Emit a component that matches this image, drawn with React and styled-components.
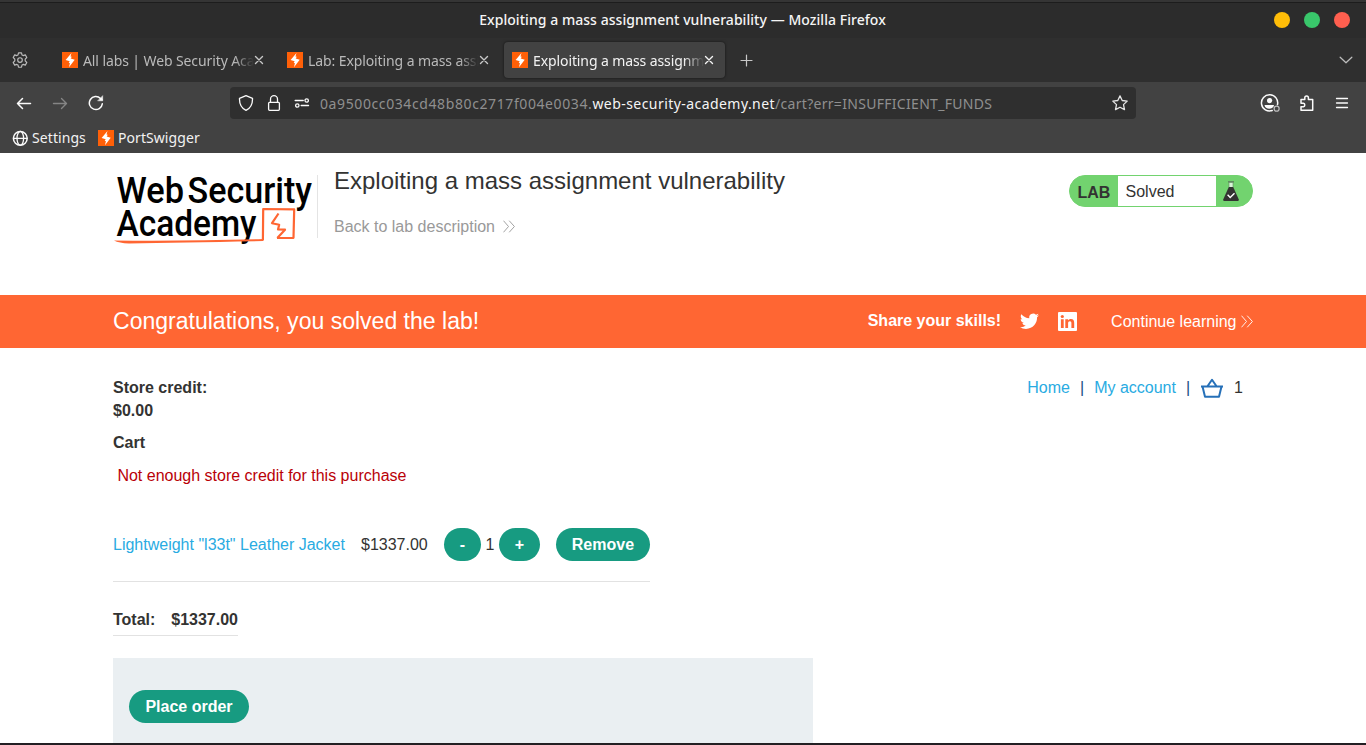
import React from "react";
import styled, { createGlobalStyle, css } from "styled-components";

const GlobalStyle = createGlobalStyle`
  *, *::before, *::after { box-sizing: border-box; }
  html, body { margin: 0; padding: 0; background: #fff; overflow: hidden; }
  svg { display: block; flex: none; }
`;

const uiFont = css`
  font-family: "Noto Sans", "Open Sans", sans-serif;
  font-size: 14px;
  white-space: nowrap;
`;

const Window = styled.div`
  display: flex;
  flex-direction: column;
  width: 1366px;
  height: 745px;
  overflow: hidden;
  background: #fff;
  border-bottom: 2px solid #231f23;
`;

/* ---------- Browser chrome ---------- */

const TitleBar = styled.header`
  flex: none;
  height: 38px;
  border-top: 2px solid #353535;
  background: #2c2c2c;
  box-shadow: inset 0 1px 0 #1d1d1d;
  display: grid;
  grid-template-columns: 1fr auto 1fr;
  align-items: center;
`;

const WindowTitle = styled.div`
  ${uiFont}
  grid-column: 2;
  font-weight: 500;
  color: #f5f5f5;
  letter-spacing: 0.05px;
  padding: 0 1px 2px 0;
`;

const WindowButtons = styled.div`
  display: flex;
  justify-content: flex-end;
  gap: 14px;
  padding-right: 16px;
`;

const WindowButton = styled.span`
  width: 16px;
  height: 16px;
  border-radius: 50%;
  background: ${(p) => p.$color};
`;

const TabStrip = styled.nav`
  flex: none;
  height: 44px;
  background: #2f2f2f;
  display: flex;
  align-items: center;
  padding: 0 11px 0 12px;
`;

const TabList = styled.div`
  display: flex;
  gap: 4px;
  margin: 0 13px 0 26px;
`;

const Tab = styled.div`
  width: 221px;
  height: 36px;
  border-radius: 4px;
  padding: 0 11px 0 8px;
  display: flex;
  align-items: center;
  color: ${(p) => (p.$active ? "#f2f2f2" : "#bababa")};
  background: ${(p) => (p.$active ? "#424242" : "transparent")};
  box-shadow: ${(p) => (p.$active ? "0 0 3px rgba(0,0,0,.6)" : "none")};
`;

const TabTitle = styled.span`
  ${uiFont}
  flex: 1;
  margin-left: 5px;
  overflow: hidden;
  padding-top: 1px;
  letter-spacing: -0.1px;
  mask-image: linear-gradient(to right, #000 calc(100% - 20px), transparent);
`;

const Spacer = styled.div`
  flex: 1;
`;

const NavBar = styled.div`
  flex: none;
  height: 42px;
  background: #424242;
  display: grid;
  grid-template-columns: 230px 906px 1fr;
  align-items: center;
`;

const NavButtons = styled.div`
  display: flex;
  gap: 20px;
  padding-left: 16px;
`;

const AddressBar = styled.div`
  height: 32px;
  border-radius: 4px;
  background: #2f2f2f;
  display: flex;
  align-items: center;
  padding: 0 8px;
`;

const AddressIcons = styled.div`
  display: flex;
  gap: 12px;
  margin-right: 10px;
`;

const Url = styled.div`
  ${uiFont}
  flex: 1;
  color: #8f8f8f;
`;

const UrlPart = styled.span`
  color: ${(p) => (p.$domain ? "#f5f5f5" : "inherit")};
  letter-spacing: ${(p) => p.$track}px;
`;

const ToolIcons = styled.div`
  display: flex;
  justify-content: flex-end;
  align-items: center;
  gap: 19px;
  padding-right: 16px;
`;

const Bookmarks = styled.div`
  flex: none;
  height: 29px;
  background: #424242;
  display: flex;
  align-items: center;
  gap: 12px;
  padding: 0 12px 2px;
`;

const Bookmark = styled.div`
  ${uiFont}
  display: flex;
  align-items: center;
  gap: 4px;
  color: #f2f2f2;
  line-height: 18px;
  letter-spacing: 0.08px;
`;

/* ---------- Page ---------- */

const Page = styled.main`
  flex: 1;
  min-height: 0;
  overflow: hidden;
  font-family: "Liberation Sans", Arial, sans-serif;
  font-size: 16px;
  line-height: 23px;
  color: #333332;
  background: #fff;
`;

const Container = styled.div`
  width: 1140px;
  margin: 0 auto;
`;

const LabHeader = styled(Container)`
  height: 142px;
  display: flex;
  align-items: flex-start;
  padding-top: 18px;
`;

const TitleBlock = styled.div`
  flex: 1;
  height: 63px;
  margin: 4px 0 0 2px;
  padding-left: 16px;
  border-left: 1px solid #e4e4e4;
`;

const LabTitle = styled.h2`
  margin: -8px 0 0;
  font-size: 24px;
  line-height: 28px;
  font-weight: 400;
  white-space: nowrap;
`;

const BackLink = styled.a`
  display: flex;
  align-items: center;
  gap: 8.5px;
  margin-top: 20px;
  color: #999;
`;

const LabStatus = styled.div`
  display: grid;
  grid-template-columns: 48px 98px 36px;
  width: 184px;
  height: 32px;
  margin-top: 4px;
  border: 1px solid #72d36f;
  border-radius: 16px;
  background: #72d36f;
  overflow: hidden;
  line-height: 31px;
`;

const StatusLabel = styled.b`
  padding: 1px 0 0 7.4px;
  color: #333332;
`;

const StatusText = styled.span`
  background: #fff;
  padding-left: 7.5px;
`;

const StatusIcon = styled.span`
  padding: 5px 0 0 7px;
`;

const Banner = styled.section`
  height: 53px;
  background: #ff6633;
  color: #fff;
`;

const BannerRow = styled(Container)`
  height: 53px;
  display: flex;
  align-items: center;
`;

const BannerTitle = styled.h4`
  flex: 1;
  margin: 0;
  font-size: 23.04px;
  font-weight: 400;
  padding-bottom: 1px;
`;

const ShareLabel = styled.b`
  margin-right: 18.5px;
  padding-bottom: 2px;
`;

const SocialIcons = styled.div`
  display: flex;
  align-items: center;
  gap: 19px;
  margin-right: 34.5px;
`;

const ContinueLink = styled.a`
  display: flex;
  align-items: center;
  gap: 4.5px;
`;

const Shop = styled(Container)`
  display: flex;
  justify-content: space-between;
  padding-top: 28px;
`;

const CartColumn = styled.section`
  width: 700px;
`;

const CreditText = styled.p`
  margin: 0;
  font-weight: 700;
`;

const CartHeading = styled.h4`
  margin: 9px 0 10px;
  font-size: 16px;
  line-height: 23px;
`;

const Warning = styled.p`
  margin: 0 0 0 4.4px;
  color: #b90007;
`;

const CartRow = styled.div`
  display: flex;
  align-items: center;
  width: 537px;
  height: 75px;
  margin: 20px 0 26px;
  border-bottom: 1px solid #e2e2e2;
`;

const ProductLink = styled.a`
  color: #29abe2;
  width: 248px;
`;

const Price = styled.span`
  width: 83px;
`;

const Quantity = styled.div`
  display: flex;
  align-items: center;
  gap: 4.5px;
  margin-right: 16px;
`;

const Button = styled.button`
  height: 33px;
  width: ${(p) => p.$width}px;
  padding: 0;
  border: 0;
  border-radius: 17px;
  background: #179b81;
  color: #fff;
  font: 700 16px/33px "Liberation Sans", Arial, sans-serif;
`;

const TotalRow = styled.div`
  display: flex;
  justify-content: space-between;
  width: 125px;
  height: 28px;
  border-bottom: 1px solid #e2e2e2;
  font-weight: 700;
`;

const OrderPanel = styled.div`
  height: 120px;
  margin-top: 22px;
  padding: 32px 16px;
  background: #eaeff2;
`;

const SiteNav = styled.nav`
  display: flex;
  height: 23px;
  align-items: center;
  margin-right: 10px;
  gap: 10px;
`;

const Divider = styled.span`
  color: #205081;
`;

const SiteLink = styled.a`
  color: #29abe2;
`;

/* ---------- Icons ---------- */

const Icon = ({ size = 16, color = "#fbfbfb", children }) => (
  <svg width={size} height={size} viewBox="0 0 16 16" fill="none" stroke={color}
    strokeWidth="1.3" strokeLinecap="round" strokeLinejoin="round">{children}</svg>
);

const BoltIcon = () => (
  <svg width="16" height="16" viewBox="0 0 16 16">
    <rect width="16" height="16" fill="#ff6008" />
    <path d="M9.500 1 3.600 8l4.100 1.200-1 1.600 1.200.4-.9 4.100 5.700-7.600-4-1.200 1.100-1.700-1.300-.4z" fill="#fff" />
  </svg>
);

const CloseIcon = ({ color }) => (
  <svg width="10" height="10" viewBox="0 0 10 10" stroke={color} strokeWidth="1.4" strokeLinecap="round">
    <path d="M1.5 1.5l7 7M8.5 1.5l-7 7" />
  </svg>
);

const Chevrons = ({ color }) => (
  <svg width="12" height="13" viewBox="0 0 12 13" fill="none" stroke={color} strokeWidth="0.9">
    <path d="M.5.7l5 5.8-5 5.8M6.2.7l5.200 5.800-5.200 5.800" />
  </svg>
);

const GearIcon = () => (
  <Icon color="#bdbdbd">
    <path strokeWidth="1.15" d="M6.5.8h3l.5 2.1 1.2.7 2.1-.7 1.5 2.6-1.6 1.6v1.8l1.6 1.6-1.5 2.6-2.1-.7-1.2.7-.5 2.1h-3L6 13.100l-1.200-.7-2.100.7-1.500-2.600 1.600-1.600V7.100L1.200 5.500l1.500-2.600 2.100.7L6 2.900z" />
    <circle cx="8" cy="8" r="2.3" strokeWidth="1.15" />
  </Icon>
);

const Logo = () => (
  <svg width="202" height="76" viewBox="0 0 202 76">
    <g fill="#000" fontFamily="Roboto, sans-serif" fontWeight="500" fontSize="36">
      <text x="3.500" y="31.700" textLength="67.500" lengthAdjust="spacingAndGlyphs">Web</text>
      <text x="74.500" y="31.700" textLength="124.500" lengthAdjust="spacingAndGlyphs">Security</text>
      <text x="3.500" y="64.700" textLength="140" lengthAdjust="spacingAndGlyphs">Academy</text>
    </g>
    <g fill="none" stroke="#ff6633" strokeWidth="2.200" strokeLinejoin="round">
      <path d="M149.900 69.500l.3-31.500 31 .3-.7 28.500-16.500.2" />
      <path d="M165.500 42.500l-6.500 9.700 7.200 1.600-1.200 4.700 7 .2-7.700 8.300" />
    </g>
    <path d="M1 69.500q75 .700 149-1.400v2q-80 1.500-134 2.500-10-.6-15-3.100z" fill="#ff6633" />
  </svg>
);

const FlaskIcon = () => (
  <svg width="16" height="21" viewBox="0 0 16 21">
    <path d="M5 .8h6" stroke="#5a765a" strokeWidth="1.200" />
    <path d="M6 1.500h4v5H6z" fill="#d8f4d8" stroke="#60865f" strokeWidth=".6" />
    <path d="M5.800 6h4.400l5.600 12.500q.4 1.500-1.300 1.500h-13Q-.2 20 .2 18.500z" fill="#333332" />
    <path d="M4.600 13.800l2.600 2.700 4.300-4.300" fill="none" stroke="#fff" strokeWidth="1.400" />
  </svg>
);

const TwitterIcon = () => (
  <svg width="19" height="20" viewBox="0 1 24 24" fill="#fff">
    <path d="M23.950 4.570a10 10 0 0 1-2.820.770 4.960 4.960 0 0 0 2.160-2.720c-.950.550-2 .950-3.130 1.180a4.920 4.920 0 0 0-8.380 4.480C7.690 8.090 4.070 6.130 1.640 3.160a4.820 4.820 0 0 0-.670 2.480c0 1.710.870 3.210 2.190 4.100a4.900 4.900 0 0 1-2.230-.620v.060a4.920 4.920 0 0 0 3.950 4.830 5 5 0 0 1-2.210.080 4.940 4.940 0 0 0 4.600 3.420A9.870 9.870 0 0 1 0 19.540a13.990 13.990 0 0 0 7.550 2.210c9.050 0 14-7.500 14-13.990 0-.210 0-.420-.020-.630a9.940 9.940 0 0 0 2.460-2.550z" />
  </svg>
);

const LinkedInIcon = () => (
  <svg width="19" height="19" viewBox="0 0 19 19">
    <rect width="19" height="19" rx="1" fill="#fff" />
    <g fill="#ff6633">
      <circle cx="4.300" cy="4.500" r="1.600" />
      <path d="M2.900 7.200h2.800V16H2.900zM7.300 7.200H10v1.200c.6-1 1.600-1.500 2.900-1.500 2.500 0 3.300 1.600 3.300 4.100v5h-2.800v-4.500c0-1.300-.3-2.200-1.500-2.200s-1.800.9-1.800 2.200V16H7.300z" />
    </g>
  </svg>
);

const BasketIcon = () => (
  <svg width="24" height="20" viewBox="0 0 24 20" fill="none" stroke="#2670b8" strokeWidth="2" strokeLinejoin="round">
    <path d="M1 8.500h22M2.500 8.500l2.500 10.300h14L21.500 8.500M7.300 8.500L12 1.800 16.700 8.500" />
  </svg>
);

const tabs = [
  { title: "All labs | Web Security Academy" },
  { title: "Lab: Exploiting a mass assignment vulnerability" },
  { title: "Exploiting a mass assignment vulnerability", active: true },
];

export default function App() {
  return (
    <Window>
      <GlobalStyle />
      <TitleBar>
        <WindowTitle>Exploiting a mass assignment vulnerability — Mozilla Firefox</WindowTitle>
        <WindowButtons>
          <WindowButton $color="#ffbd08" />
          <WindowButton $color="#39c76b" />
          <WindowButton $color="#ff5f4f" />
        </WindowButtons>
      </TitleBar>

      <TabStrip>
        <GearIcon />
        <TabList>
          {tabs.map((t) => (
            <Tab key={t.title} $active={t.active}>
              <BoltIcon />
              <TabTitle>{t.title}</TabTitle>
              <CloseIcon color={t.active ? "#f5f5f5" : "#c8c8c8"} />
            </Tab>
          ))}
        </TabList>
        <Icon color="#c8c8c8"><path d="M8.500 3v11M3 8.500h11" strokeWidth="1.200" /></Icon>
        <Spacer />
        <Icon size={18} color="#bdbdbd"><path d="M2.800 5.500L8 10.500l5.200-5" strokeWidth="1.100" /></Icon>
      </TabStrip>

      <NavBar>
        <NavButtons>
          <Icon><path d="M14.500 8.500H1.500M6.500 3.500l-5 5 5 5" strokeWidth="1.500" /></Icon>
          <Icon color="#858585"><path d="M1.500 8.500h13M9.500 3.500l5 5-5 5" strokeWidth="1.400" /></Icon>
          <Icon>
            <path d="M14.300 8.800A6.500 6.500 0 1 1 12.500 3.500l1.500 1.300" strokeWidth="1.500" />
            <path d="M14.700 1v4.800H10z" fill="#fbfbfb" strokeWidth=".5" />
          </Icon>
        </NavButtons>
        <AddressBar>
          <AddressIcons>
            <Icon><path d="M8 .7l6.500 2.700c.2 5-1.600 9.500-6.500 12C3.100 12.900 1.300 8.400 1.500 3.400z" /></Icon>
            <Icon><rect x="2.600" y="7.300" width="10.800" height="8" rx="1" /><path d="M4.500 7V4.200a3.500 3.500 0 0 1 7 0V7" /></Icon>
            <Icon>
              <path d="M1.200 5.500h8M7.200 10.500h7.300" strokeWidth="1.400" />
              <circle cx="12.700" cy="5.500" r="1.700" /><circle cx="3.300" cy="10.500" r="1.700" />
            </Icon>
          </AddressIcons>
          <Url>
            <UrlPart $track={0.6}>0a9500cc034cd48b80c2717f004e0034.</UrlPart>
            <UrlPart $domain $track={0.44}>web-security-academy.net</UrlPart>
            <UrlPart $track={0.3}>/cart?err=INSUFFICIENT_FUNDS</UrlPart>
          </Url>
          <Icon color="#e6e6e6"><path d="M8 .9l2.200 4.600 5 .6-3.700 3.500 1 5L8 12.200l-4.500 2.400 1-5L.8 6.100l5-.6z" /></Icon>
        </AddressBar>
        <ToolIcons>
          <Icon size={20}>
            <path d="M9.800 14A6.500 6.500 0 1 1 14 9.300" strokeWidth="1.200" />
            <circle cx="7.700" cy="6" r="2.100" fill="#fbfbfb" stroke="none" />
            <path d="M3.600 9.600h7.600c-.3 4-7.300 4-7.600 0z" fill="#fbfbfb" stroke="none" />
            <circle cx="13.300" cy="12.500" r="2" stroke="#bdbdbd" strokeWidth="1" />
          </Icon>
          <Icon><path d="M2 15.200v-3.400h2.400a1.800 1.800 0 0 0 0-3.500H2V4.500h3.800V2.800a1.800 1.800 0 0 1 3.600 0v1.700h4.300v10.700z" strokeWidth="1.500" /></Icon>
          <Icon><path d="M2.500 3.500h11M2.500 8h11M2.500 12.500h11" strokeWidth="1.300" /></Icon>
        </ToolIcons>
      </NavBar>

      <Bookmarks>
        <Bookmark>
          <Icon>
            <circle cx="8.300" cy="8.300" r="6.900" strokeWidth="1.500" />
            <ellipse cx="8.300" cy="8.300" rx="3.300" ry="6.900" />
            <path d="M1.500 8.300h13.600" />
          </Icon>
          Settings
        </Bookmark>
        <Bookmark><BoltIcon />PortSwigger</Bookmark>
      </Bookmarks>

      <Page>
        <LabHeader>
          <Logo />
          <TitleBlock>
            <LabTitle>Exploiting a mass assignment vulnerability</LabTitle>
            <BackLink>Back to lab description <Chevrons color="#999" /></BackLink>
          </TitleBlock>
          <LabStatus>
            <StatusLabel>LAB</StatusLabel>
            <StatusText>Solved</StatusText>
            <StatusIcon><FlaskIcon /></StatusIcon>
          </LabStatus>
        </LabHeader>

        <Banner>
          <BannerRow>
            <BannerTitle>Congratulations, you solved the lab!</BannerTitle>
            <ShareLabel>Share your skills!</ShareLabel>
            <SocialIcons><TwitterIcon /><LinkedInIcon /></SocialIcons>
            <ContinueLink>Continue learning <Chevrons color="#fff" /></ContinueLink>
          </BannerRow>
        </Banner>

        <Shop>
          <CartColumn>
            <CreditText>Store credit:</CreditText>
            <CreditText>$0.00</CreditText>
            <CartHeading>Cart</CartHeading>
            <Warning>Not enough store credit for this purchase</Warning>
            <CartRow>
              <ProductLink>Lightweight "l33t" Leather Jacket</ProductLink>
              <Price>$1337.00</Price>
              <Quantity>
                <Button $width={37}>-</Button>1<Button $width={41}>+</Button>
              </Quantity>
              <Button $width={94}>Remove</Button>
            </CartRow>
            <TotalRow><span>Total:</span><span>$1337.00</span></TotalRow>
            <OrderPanel><Button $width={120}>Place order</Button></OrderPanel>
          </CartColumn>
          <SiteNav>
            <SiteLink>Home</SiteLink><Divider>|</Divider>
            <SiteLink>My account</SiteLink><Divider>|</Divider>
            <BasketIcon />1
          </SiteNav>
        </Shop>
      </Page>
    </Window>
  );
}
